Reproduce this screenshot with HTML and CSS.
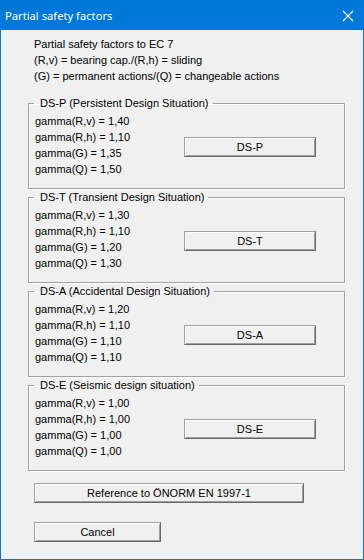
FILE: index.html
```html
<!DOCTYPE html>
<html lang="en">
<head>
  <meta charset="UTF-8">
  <title>Partial safety factors</title>
  <link rel="stylesheet" href="styles.css">
</head>
<body>
  <div class="window">
    <div class="titlebar">
      <span class="title">Partial safety factors</span>
      <svg class="close" width="12" height="12" viewBox="0 0 12 12">
        <path d="M1 1 L11 11 M11 1 L1 11" stroke="#fff" stroke-width="1.1" fill="none"/>
      </svg>
    </div>

    <div class="content">
      <div class="intro">
        <div>Partial safety factors to EC 7</div>
        <div>(R,v) = bearing cap./(R,h) = sliding</div>
        <div>(G) = permanent actions/(Q) = changeable actions</div>
      </div>

      <fieldset class="group">
        <legend>DS-P (Persistent Design Situation)</legend>
        <div class="group-body">
          <div class="values">
            <div>gamma(R,v) = 1,40</div>
            <div>gamma(R,h) = 1,10</div>
            <div>gamma(G) = 1,35</div>
            <div>gamma(Q) = 1,50</div>
          </div>
          <button class="btn ds">DS-P</button>
        </div>
      </fieldset>

      <fieldset class="group">
        <legend>DS-T (Transient Design Situation)</legend>
        <div class="group-body">
          <div class="values">
            <div>gamma(R,v) = 1,30</div>
            <div>gamma(R,h) = 1,10</div>
            <div>gamma(G) = 1,20</div>
            <div>gamma(Q) = 1,30</div>
          </div>
          <button class="btn ds">DS-T</button>
        </div>
      </fieldset>

      <fieldset class="group">
        <legend>DS-A (Accidental Design Situation)</legend>
        <div class="group-body">
          <div class="values">
            <div>gamma(R,v) = 1,20</div>
            <div>gamma(R,h) = 1,10</div>
            <div>gamma(G) = 1,10</div>
            <div>gamma(Q) = 1,10</div>
          </div>
          <button class="btn ds">DS-A</button>
        </div>
      </fieldset>

      <fieldset class="group">
        <legend>DS-E (Seismic design situation)</legend>
        <div class="group-body">
          <div class="values">
            <div>gamma(R,v) = 1,00</div>
            <div>gamma(R,h) = 1,00</div>
            <div>gamma(G) = 1,00</div>
            <div>gamma(Q) = 1,00</div>
          </div>
          <button class="btn ds">DS-E</button>
        </div>
      </fieldset>

      <button class="btn reference">Reference to ÖNORM EN 1997-1</button>
      <button class="btn cancel">Cancel</button>
    </div>
  </div>
</body>
</html>
```

FILE: styles.css
```css
body {
  margin: 0;
  background: #f0f0f0;
  font-family: 'Liberation Sans', Arial, sans-serif;
  font-size: 11px;
  color: #000;
}

.window {
  width: 364px;
  height: 560px;
  box-sizing: border-box;
  border: 1px solid #0078d7;
  background: #f0f0f0;
}

.titlebar {
  height: 29px;
  background: #0078d7;
  display: flex;
  align-items: center;
  justify-content: space-between;
  padding: 0 9px 0 4px;
}

.title {
  color: #fff;
  font-family: 'Noto Sans', sans-serif;
  font-size: 11.2px;
  margin-top: -1px;
}

.close {
  display: block;
}

.content {
  display: flex;
  flex-direction: column;
  align-items: flex-start;
  padding: 6px 18px 0 27px;
}

.intro {
  margin-left: 6px;
  line-height: 16px;
}

.group {
  align-self: stretch;
  margin: 1px 0 0 0;
  padding: 3px 0 11px 6px;
  border: 1px solid #a0a0a0;
  box-shadow: inset 1px 1px 0 #fff, 1px 1px 0 #fff;
  min-width: 0;
}

.intro + .group {
  margin-top: 12px;
}

.group legend {
  margin-left: -1px;
  padding: 0 4px 0 6px;
  line-height: 14px;
}

.group-body {
  display: flex;
  align-items: center;
}

.values {
  width: 149px;
  line-height: 16px;
}

.btn {
  font-family: 'Liberation Sans', Arial, sans-serif;
  font-size: 11px;
  color: #000;
  background: #f0f0f0;
  height: 20px;
  padding: 0;
  box-sizing: border-box;
  border-style: solid;
  border-width: 1px;
  border-color: #a0a0a0 #696969 #696969 #a0a0a0;
  box-shadow: inset 1px 1px 0 #fff, inset -1px -1px 0 #a0a0a0;
  border-radius: 0;
}

.ds {
  width: 132px;
  margin-top: 3px;
}

.reference {
  width: 270px;
  margin: 12px 0 0 6px;
}

.cancel {
  width: 127px;
  margin: 19px 0 0 6px;
}
```
